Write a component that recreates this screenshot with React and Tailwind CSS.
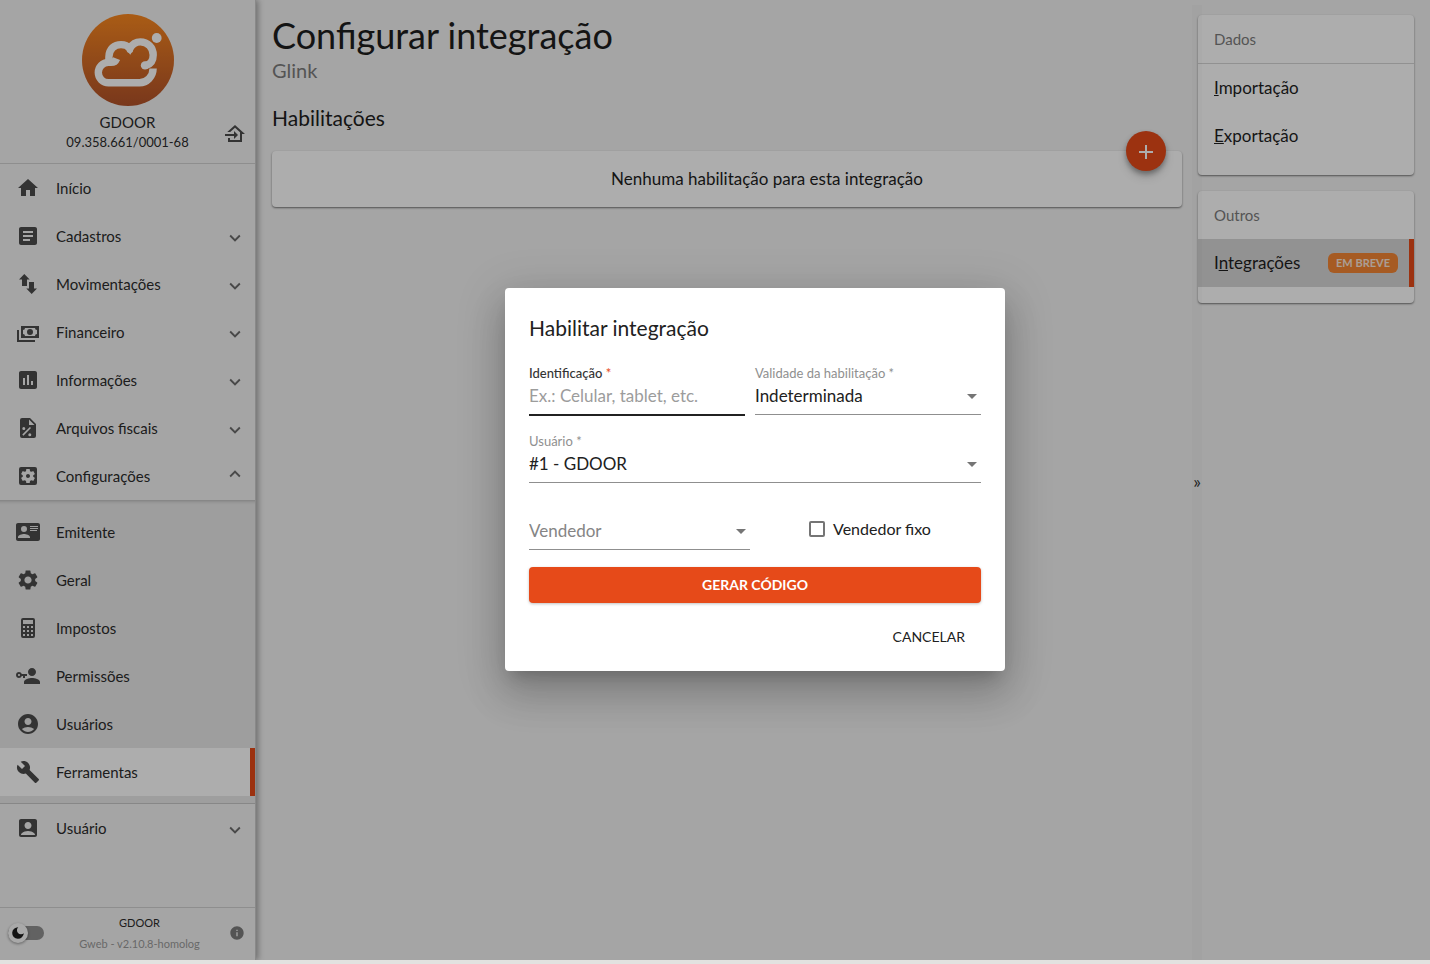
import React from "react";
import {
  MdHome,
  MdArticle,
  MdAssessment,
  MdSettingsApplications,
  MdSettings,
  MdAccountCircle,
  MdAccountBox,
  MdInfo,
  MdExpandMore,
  MdArrowDropDown,
} from "react-icons/md";

function Icon({ d, children }) {
  return (
    <svg viewBox="0 0 24 24" className="size-6 fill-current" aria-hidden="true">
      {d ? <path d={d} /> : children}
    </svg>
  );
}

const PATHS = {
  arrows: "M8.3 2 3 7.5H6V14H11V7.5H13.7ZM15.7 22 21 16.5H18V10H13V16.5H10.3Z",
  cash: "M5,6H23V18H5V6M14,9A3,3 0 0,1 17,12A3,3 0 0,1 14,15A3,3 0 0,1 11,12A3,3 0 0,1 14,9M9,8A2,2 0 0,1 7,10V14A2,2 0 0,1 9,16H19A2,2 0 0,1 21,14V10A2,2 0 0,1 19,8H9M1,10H3V20H19V22H1V10Z",
  card: "M2,3H22C23.05,3 24,3.95 24,5V19C24,20.05 23.05,21 22,21H2C0.95,21 0,20.05 0,19V5C0,3.95 0.95,3 2,3M14,6V7H22V6H14M14,8V9H21.5L22,9V8H14M14,10V11H21V10H14M8,13.91C6,13.91 2,15 2,17V18H14V17C14,15 10,13.91 8,13.91M8,6A3,3 0 0,0 5,9A3,3 0 0,0 8,12A3,3 0 0,0 11,9A3,3 0 0,0 8,6Z",
  calculator:
    "M7,2H17A2,2 0 0,1 19,4V20A2,2 0 0,1 17,22H7A2,2 0 0,1 5,20V4A2,2 0 0,1 7,2M7,4V8H17V4H7M7,10V12H9V10H7M11,10V12H13V10H11M15,10V12H17V10H15M7,14V16H9V14H7M11,14V16H13V14H11M15,14V16H17V14H15M7,18V20H9V18H7M11,18V20H13V18H11M15,18V20H17V18H15Z",
  key: "M11 10V12H9V14H7V12H5.8C5.4 13.2 4.3 14 3 14C1.3 14 0 12.7 0 11S1.3 8 3 8C4.3 8 5.4 8.8 5.8 10H11M3 10C2.4 10 2 10.4 2 11S2.4 12 3 12 4 11.6 4 11 3.6 10 3 10M16 14C18.7 14 24 15.3 24 18V20H8V18C8 15.3 13.3 14 16 14M16 12C13.8 12 12 10.2 12 8S13.8 4 16 4 20 5.8 20 8 18.2 12 16 12Z",
  wrench:
    "M22.7,19L13.6,9.9C14.5,7.6 14,4.9 12.1,3C10.1,1 7.1,0.6 4.7,1.7L9,6L6,9L1.6,4.7C0.4,7.1 0.9,10.1 2.9,12.1C4.8,14 7.5,14.5 9.8,13.6L18.9,22.7C19.3,23.1 19.9,23.1 20.3,22.7L22.6,20.4C23.1,20 23.1,19.3 22.7,19Z",
  homeImport:
    "M15 13L11 9V12H2V14H11V17M5 20V16H7V18H17V10.19L12 5.69L7.21 10H4.22L12 3L22 12H19V20H5Z",
};

function FilePercent() {
  return (
    <Icon>
      <path
        fillRule="evenodd"
        d="M14 2H6A2 2 0 0 0 4 4V20A2 2 0 0 0 6 22H18A2 2 0 0 0 20 20V8ZM13 3.5 18.5 9H13ZM7.8 11A1.5 1.5 0 1 1 7.8 14 1.5 1.5 0 0 1 7.8 11ZM13.8 17.2A1.5 1.5 0 1 1 13.8 20.2 1.5 1.5 0 0 1 13.8 17.2ZM13.9 11 15 12.1 7.4 19.7 6.3 18.6Z"
      />
    </Icon>
  );
}

function Logo() {
  return (
    <svg viewBox="4 4 92 92" className="size-[92px]" role="img" aria-label="GDOOR">
      <defs>
        <linearGradient id="logo-fill" x1="0" y1="0" x2="0" y2="1">
          <stop offset="0" stopColor="#fa8820" />
          <stop offset="1" stopColor="#b2522a" />
        </linearGradient>
      </defs>
      <circle cx="50" cy="50" r="46" fill="url(#logo-fill)" />
      <g fill="none" stroke="#fff" strokeWidth="7.4">
        <path d="M75.1 58.6C75.1 66.5 69 72.8 61.5 72.8H30.5A10.2 10.2 0 0 1 30.5 52.4H33C36 52.4 37.6 51.2 38.6 48.6" />
        <path d="M30.9 53V47C30.9 39 36.5 34.6 43 34.6C46.8 34.6 49.8 36 51.8 38.4C54.4 34 58 31.9 62.3 31.9C69.7 31.9 75.2 37.6 75.2 45C75.2 50.8 72 54.3 68 55.6" />
      </g>
      <circle cx="51.9" cy="39.8" r="3.3" fill="#fff" />
      <circle cx="67" cy="55.4" r="4.2" fill="#fff" />
      <circle cx="78.7" cy="28" r="4.9" fill="#fff" />
    </svg>
  );
}

const MENU = [
  { label: "Início", icon: <MdHome className="size-6" />, leaf: true },
  { label: "Cadastros", icon: <MdArticle className="size-6" /> },
  { label: "Movimentações", icon: <Icon d={PATHS.arrows} /> },
  { label: "Financeiro", icon: <Icon d={PATHS.cash} /> },
  { label: "Informações", icon: <MdAssessment className="size-6" /> },
  { label: "Arquivos fiscais", icon: <FilePercent /> },
  { label: "Configurações", icon: <MdSettingsApplications className="size-6" />, open: true },
];

const SUBMENU = [
  { label: "Emitente", icon: <Icon d={PATHS.card} /> },
  { label: "Geral", icon: <MdSettings className="size-6" /> },
  { label: "Impostos", icon: <Icon d={PATHS.calculator} /> },
  { label: "Permissões", icon: <Icon d={PATHS.key} /> },
  { label: "Usuários", icon: <MdAccountCircle className="size-6" /> },
  { label: "Ferramentas", icon: <Icon d={PATHS.wrench} />, active: true },
];

function MenuItem({ label, icon, leaf, open }) {
  const content = (
    <>
      <span className="text-[#4c4c4c]">{icon}</span>
      <span className="flex-1 text-left">{label}</span>
      {!leaf && (
        <span className={open ? "rotate-180 pt-1 text-[#6c6c6c]" : "pt-1 text-[#6c6c6c]"}>
          <MdExpandMore className="size-[22px]" />
        </span>
      )}
    </>
  );
  const cls = "flex h-12 w-full items-center gap-4 pl-4 pr-[9px]";
  return leaf ? (
    <a href="#" className={cls}>{content}</a>
  ) : (
    <button type="button" aria-expanded={!!open} className={cls}>{content}</button>
  );
}

function Sidebar() {
  return (
    <aside className="z-10 flex w-64 shrink-0 flex-col border-r border-[#cacaca] bg-[#f4f4f4] text-[15px] text-[#2c2c2c] shadow-[2px_0_6px_rgba(0,0,0,0.35)]">
      <header className="flex flex-col items-center border-b border-[#d2d2d2] pt-3.5 pb-[11px]">
        <Logo />
        <div className="grid w-full grid-cols-[40px_1fr_40px] items-center pt-1.5">
          <div className="col-start-2 text-center leading-5">
            <div>GDOOR</div>
            <div className="text-[13px] leading-5">09.358.661/0001-68</div>
          </div>
          <button type="button" aria-label="Trocar empresa" className="flex justify-center pt-1 text-[#4c4c4c]">
            <Icon d={PATHS.homeImport} />
          </button>
        </div>
      </header>
      <nav>
        {MENU.map((item) => (
          <MenuItem key={item.label} {...item} />
        ))}
        <div className="border-y border-[#c8c8c8] bg-[#e9e9e9] py-[7px] shadow-[inset_0_4px_3px_-3px_rgba(0,0,0,0.15)]">
          {SUBMENU.map(({ label, icon, active }) => (
            <a
              key={label}
              href="#"
              className={
                active
                  ? "flex h-12 items-center gap-4 border-r-5 border-[#e64a19] bg-white pl-4"
                  : "flex h-12 items-center gap-4 pl-4"
              }
            >
              <span className="text-[#4c4c4c]">{icon}</span>
              {label}
            </a>
          ))}
        </div>
        <MenuItem label="Usuário" icon={<MdAccountBox className="size-6" />} />
      </nav>
      <footer className="mt-auto flex items-center border-t border-[#d2d2d2] pt-1 pr-2.5 pb-1.5 pl-2">
        <label className="flex cursor-pointer items-center">
          <input type="checkbox" className="sr-only" aria-label="Modo escuro" />
          <span className="flex h-3.5 w-9 items-center rounded-full bg-[#919191]">
            <span className="flex size-5 shrink-0 items-center justify-center rounded-full bg-[#fafafa] shadow-[0_1px_3px_rgba(0,0,0,0.4)]">
              <svg viewBox="0 0 24 24" className="size-3.5 fill-[#1c1c1c]" aria-hidden="true">
                <path d="M12.5 2A10 10 0 1 0 22 12.500 6 6 0 0 1 12.500 2Z" />
              </svg>
            </span>
          </span>
        </label>
        <div className="flex-1 pl-1.5 text-center text-[11px] leading-[21px]">
          <div>GDOOR</div>
          <div className="text-[#9a9a9a]">Gweb - v2.10.8-homolog</div>
        </div>
        <MdInfo className="size-4 text-[#7c7c7c]" />
      </footer>
    </aside>
  );
}

function Panels() {
  return (
    <aside className="mr-4 flex w-[216px] shrink-0 flex-col gap-4 pt-[15px] text-[17px] text-[#1e1e1e]">
      <section className="rounded bg-white pb-[15px] shadow-[0_1px_2px_rgba(0,0,0,0.5)]">
        <h2 className="flex h-[49px] items-center border-b border-[#d6d6d6] px-4 text-[15px] text-[#7d7d7d]">Dados</h2>
        <a href="#" className="flex h-12 items-center px-4"><span><u>I</u>mportação</span></a>
        <a href="#" className="flex h-12 items-center px-4"><span><u>E</u>xportação</span></a>
      </section>
      <section className="rounded bg-white pb-4 shadow-[0_1px_2px_rgba(0,0,0,0.5)]">
        <h2 className="flex h-12 items-center px-4 text-[15px] text-[#7d7d7d]">Outros</h2>
        <a href="#" className="flex h-12 items-center justify-between border-r-5 border-[#e64a19] bg-[#d7d7d7] pr-[11px] pl-4">
          <span>I<u>n</u>tegrações</span>
          <span className="rounded-md bg-[#f58634] px-2 text-[11px] leading-5 font-bold text-[#fbe9dc]">EM BREVE</span>
        </a>
      </section>
    </aside>
  );
}

const FIELD = "block h-[33px] w-full appearance-none border-b border-[#8f8f8f] bg-transparent pb-1 text-[17px] outline-none";

function SelectField({ id, label, value, muted }) {
  return (
    <div className="flex flex-col">
      {!muted && (
        <label htmlFor={id} className="text-[13px] leading-[18px] text-[#8f8f8f]">{label} *</label>
      )}
      <div className="grid items-center">
        <select
          id={id}
          aria-label={muted ? label : undefined}
          className={muted ? FIELD + " col-start-1 row-start-1 text-[#858585]" : FIELD + " col-start-1 row-start-1 text-[#212121]"}
        >
          <option>{value}</option>
        </select>
        <MdArrowDropDown className="pointer-events-none col-start-1 row-start-1 mb-1 size-6 -mr-[3px] justify-self-end text-[#757575]" />
      </div>
    </div>
  );
}

function Dialog() {
  return (
    <form
      role="dialog"
      aria-modal="true"
      aria-labelledby="dialog-title"
      className="flex w-[500px] flex-col rounded bg-white px-6 pt-6 pb-4 text-[#212121] shadow-[0_11px_15px_-7px_rgba(0,0,0,0.2),0_24px_38px_3px_rgba(0,0,0,0.14),0_9px_46px_8px_rgba(0,0,0,0.12)]"
    >
      <h2 id="dialog-title" className="text-[21px] leading-8">Habilitar integração</h2>
      <div className="mt-5 grid h-[52px] grid-cols-2">
        <div className="mr-2.5">
          <label htmlFor="ident" className="block text-[13px] leading-[18px] font-medium text-[#333]">
            Identificação <span className="text-[#e64a19]">*</span>
          </label>
          <input
            id="ident"
            placeholder="Ex.: Celular, tablet, etc."
            className="block h-[34px] w-full border-b-2 border-[#212121] pb-1 text-[17px] outline-none placeholder:text-[#9c9c9c]"
          />
        </div>
        <SelectField id="validade" label="Validade da habilitação" value="Indeterminada" />
      </div>
      <div className="mt-4">
        <SelectField id="usuario" label="Usuário" value="#1 - GDOOR" />
      </div>
      <div className="mt-[34px] flex items-start">
        <div className="w-[221px]">
          <SelectField id="vendedor" label="Vendedor" value="Vendedor" muted />
        </div>
        <label className="ml-[59px] flex items-center gap-2 text-base leading-6">
          <input type="checkbox" className="size-4 appearance-none rounded-xs border-2 border-[#757575]" />
          Vendedor fixo
        </label>
      </div>
      <button type="submit" className="mt-[17px] h-9 rounded bg-[#e64a19] text-sm font-bold text-white shadow-[0_1px_3px_rgba(0,0,0,0.25)]">
        GERAR CÓDIGO
      </button>
      <button type="button" className="mt-4 h-9 self-end px-4 text-sm">CANCELAR</button>
    </form>
  );
}

export default function App() {
  return (
    <div className="flex min-h-screen flex-col bg-[#e2e2e0] pb-1 font-['Lato',sans-serif]">
      <div className="relative flex flex-1 overflow-hidden bg-[#f3f3f3]">
        <Sidebar />
        <main className="min-w-0 flex-1 px-4 pt-[13px] text-[#1e1e1e]">
          <h1 className="text-4xl leading-[44px]">Configurar integração</h1>
          <p className="text-xl leading-[26px] text-[#7d7d7d]">Glink</p>
          <h2 className="mt-5 text-[21px] leading-[30px]">Habilitações</h2>
          <section className="relative mt-[18px] flex h-14 items-center justify-center rounded bg-white pl-20 text-[17px] shadow-[0_1px_2px_rgba(0,0,0,0.5)]">
            <p>Nenhuma habilitação para esta integração</p>
            <button
              type="button"
              aria-label="Adicionar habilitação"
              className="absolute -top-5 right-4 flex size-10 items-center justify-center rounded-full bg-[#e64a19] pt-0.5 shadow-[0_3px_5px_rgba(0,0,0,0.3),0_6px_10px_rgba(0,0,0,0.15)]"
            >
              <svg viewBox="0 0 16 16" className="size-4 stroke-white" aria-hidden="true">
                <path d="M8 1V15M1 8H15" strokeWidth="2" />
              </svg>
            </button>
          </section>
        </main>
        <Panels />
        <button
          type="button"
          aria-label="Recolher painel"
          className="absolute top-[5px] right-[228px] bottom-0 flex w-2.5 items-center justify-center bg-black/[0.015] pb-1 text-lg text-[#333]"
        >
          »
        </button>
        <div className="absolute inset-0 z-20 flex items-center justify-center bg-black/32 pb-0.5 pl-20">
          <Dialog />
        </div>
      </div>
    </div>
  );
}
